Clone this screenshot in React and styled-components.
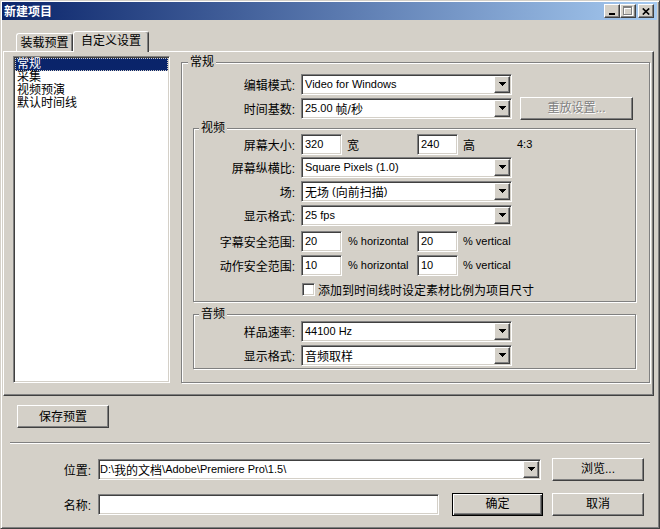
import React from "react";
import styled, { createGlobalStyle, css } from "styled-components";

const FACE = "#d4d0c8";
const SHADOW = "#808080";
const DARK = "#404040";
const HI = "#ffffff";
const SEL = "#0a246a";

const GlobalStyle = createGlobalStyle`
  *, *::before, *::after { box-sizing: border-box; }
  html, body { margin: 0; padding: 0; background: ${FACE}; }
  body {
    font-family: "Liberation Sans", "Noto Sans CJK SC", sans-serif;
    font-size: 12px;
    color: #000;
  }
`;

const sunken = css`
  background: #fff;
  border: 1px solid;
  border-color: ${SHADOW} ${HI} ${HI} ${SHADOW};
  box-shadow: inset 1px 1px 0 ${DARK}, inset -1px -1px 0 ${FACE};
`;

const raised = css`
  background: ${FACE};
  border: 1px solid;
  border-color: ${HI} ${DARK} ${DARK} ${HI};
  box-shadow: inset -1px -1px 0 ${SHADOW};
`;

const Window = styled.div`
  width: 660px;
  height: 529px;
  display: flex;
  flex-direction: column;
  background: ${FACE};
  border: 1px solid;
  border-color: ${FACE} ${DARK} ${DARK} ${FACE};
  box-shadow: inset 1px 1px 0 ${HI}, inset -1px -1px 0 ${SHADOW};
  padding: 1px 2px 2px 1px;
`;

const TitleBar = styled.div`
  height: 18px;
  flex: none;
  display: flex;
  align-items: center;
  padding: 0 3px 0 2px;
  background: linear-gradient(to right, #0a246a, #a6caf0);
`;

const TitleText = styled.div`
  flex: 1;
  color: #fff;
  font-weight: bold;
  font-size: 12px;
  line-height: 14px;
  font-family: "Noto Sans CJK SC", sans-serif;
`;

const CaptionButtons = styled.div`
  display: flex;
  align-items: center;
`;

const CaptionButton = styled.div`
  ${raised}
  width: 16px;
  height: 14px;
  margin-left: ${(p) => p.$gap || 0}px;
  display: flex;
  align-items: center;
  justify-content: center;
  svg { display: block; }
`;

const TabStrip = styled.div`
  flex: none;
  height: 20px;
  margin-top: 11px;
  padding-left: 14px;
  display: flex;
  align-items: flex-end;
`;

const Tab = styled.div`
  ${raised}
  border-bottom: none;
  box-shadow: inset -1px 0 0 ${SHADOW};
  border-radius: 3px 3px 0 0;
  width: ${(p) => p.$w}px;
  height: ${(p) => (p.$active ? 21 : 18)}px;
  margin-bottom: ${(p) => (p.$active ? -1 : 0)}px;
  display: flex;
  align-items: center;
  justify-content: center;
  line-height: 14px;
  ${(p) =>
    p.$active &&
    css`
      position: relative;
      z-index: 1;
      padding-bottom: 2px;
    `}
`;

const TabPanel = styled.div`
  ${raised}
  flex: none;
  margin-left: 1px;
  width: 651px;
  height: 345px;
  display: flex;
  gap: 11px;
  padding: 4px 3px 12px 9px;
`;

const ListBox = styled.div`
  ${sunken}
  width: 157px;
  flex: none;
  padding: 1px;
  display: flex;
  flex-direction: column;
`;

const ListItem = styled.div`
  height: 13px;
  line-height: 13px;
  padding-left: 2px;
  white-space: nowrap;
  ${(p) =>
    p.$selected &&
    css`
      background: ${SEL};
      color: #fff;
      outline: 1px dotted ${FACE};
      outline-offset: -1px;
    `}
`;

const Group = styled.div`
  position: relative;
  flex: ${(p) => (p.$grow ? 1 : "none")};
  border: 1px solid ${SHADOW};
  box-shadow: inset 1px 1px 0 ${HI}, 1px 1px 0 ${HI};
  display: flex;
  flex-direction: column;
  margin-top: ${(p) => p.$mt || 0}px;
  padding: ${(p) => p.$pad};
`;

const Caption = styled.span`
  position: absolute;
  top: -7px;
  left: ${(p) => p.$left}px;
  padding: 0 2px;
  background: ${FACE};
  line-height: 13px;
  font-size: 12px;
`;

const FormRow = styled.div`
  display: flex;
  align-items: center;
  height: ${(p) => p.$h || 24}px;
  margin-top: ${(p) => p.$mt || 0}px;
  flex: none;
`;

const FieldLabel = styled.span`
  width: ${(p) => p.$w}px;
  flex: none;
  text-align: right;
  padding-right: 6px;
  white-space: nowrap;
`;

const ComboFrame = styled.div`
  ${sunken}
  width: ${(p) => p.$w}px;
  height: 21px;
  flex: none;
  padding: 1px;
  display: flex;
  align-items: stretch;
`;

const ComboValue = styled.div`
  flex: 1;
  display: flex;
  align-items: center;
  padding-left: ${(p) => (p.$pl != null ? p.$pl : 2)}px;
  font-size: 11px;
  white-space: nowrap;
  overflow: hidden;
`;

const Cjk = styled.span`
  font-size: 12px;
`;

const DropButton = styled.div`
  ${raised}
  width: 16px;
  flex: none;
  display: flex;
  align-items: center;
  justify-content: center;
  svg { display: block; }
`;

const TextBox = styled.div`
  ${sunken}
  width: ${(p) => p.$w}px;
  height: 21px;
  flex: none;
  display: flex;
  align-items: center;
  padding: 0 3px;
  font-size: 11px;
`;

const Unit = styled.span`
  width: ${(p) => p.$w}px;
  flex: none;
  padding-left: ${(p) => p.$pl || 5}px;
  white-space: nowrap;
  font-size: ${(p) => (p.$latin ? 11 : 12)}px;
`;

const Ratio = styled.span`
  font-size: 11px;
`;

const CheckBox = styled.div`
  ${sunken}
  width: 13px;
  height: 13px;
  flex: none;
`;

const CheckLabel = styled.span`
  margin-left: 3px;
  white-space: nowrap;
`;

const PushButton = styled.div`
  ${raised}
  width: ${(p) => p.$w}px;
  height: 23px;
  flex: none;
  margin-left: ${(p) => p.$ml || 0}px;
  display: flex;
  align-items: center;
  justify-content: center;
  line-height: 14px;
  ${(p) =>
    p.$disabled &&
    css`
      color: ${SHADOW};
      text-shadow: 1px 1px 0 ${HI};
    `}
`;

const DefaultButton = styled(PushButton)`
  border: 1px solid #000;
  box-shadow: inset 1px 1px 0 ${HI}, inset -1px -1px 0 ${DARK},
    inset -2px -2px 0 ${SHADOW};
`;

const SaveRow = styled.div`
  flex: none;
  display: flex;
  margin-top: 9px;
  padding-left: 15px;
`;

const Separator = styled.div`
  flex: none;
  width: 640px;
  height: 2px;
  margin: 14px 0 0 8px;
  border-top: 1px solid ${SHADOW};
  border-bottom: 1px solid ${HI};
`;

const BottomRow = styled.div`
  flex: none;
  display: flex;
  align-items: center;
  height: 24px;
  margin-top: ${(p) => p.$mt}px;
`;

const BottomLabel = styled.span`
  width: 96px;
  flex: none;
  text-align: right;
  padding-right: 7px;
`;

function Arrow() {
  return (
    <svg width="7" height="4" viewBox="0 0 7 4" shapeRendering="crispEdges">
      <rect x="0" y="0" width="7" height="1" fill="#000" />
      <rect x="1" y="1" width="5" height="1" fill="#000" />
      <rect x="2" y="2" width="3" height="1" fill="#000" />
      <rect x="3" y="3" width="1" height="1" fill="#000" />
    </svg>
  );
}

function ComboBox({ width = 211, pl, children }) {
  return (
    <ComboFrame $w={width}>
      <ComboValue $pl={pl}>{children}</ComboValue>
      <DropButton>
        <Arrow />
      </DropButton>
    </ComboFrame>
  );
}

function MinGlyph() {
  return (
    <svg width="8" height="7" viewBox="0 0 8 7" shapeRendering="crispEdges">
      <rect x="1" y="5" width="6" height="2" fill="#000" />
    </svg>
  );
}

function MaxGlyph() {
  return (
    <svg width="10" height="10" viewBox="0 0 10 10" shapeRendering="crispEdges">
      <rect x="1.5" y="1.5" width="8" height="8" fill="none" stroke="#fff" />
      <rect x="1" y="2" width="8" height="1" fill="#fff" />
      <rect x="0.5" y="0.5" width="8" height="8" fill="none" stroke={SHADOW} />
      <rect x="0" y="1" width="9" height="1" fill={SHADOW} />
    </svg>
  );
}

function CloseGlyph() {
  return (
    <svg width="8" height="7" viewBox="0 0 8 7">
      <path d="M0.8 0.5 L7.2 6.5 M7.2 0.5 L0.8 6.5" stroke="#000" strokeWidth="1.7" />
    </svg>
  );
}

export default function App() {
  return (
    <>
      <GlobalStyle />
      <Window>
        <TitleBar>
          <TitleText>新建项目</TitleText>
          <CaptionButtons>
            <CaptionButton>
              <MinGlyph />
            </CaptionButton>
            <CaptionButton>
              <MaxGlyph />
            </CaptionButton>
            <CaptionButton $gap={2}>
              <CloseGlyph />
            </CaptionButton>
          </CaptionButtons>
        </TitleBar>

        <TabStrip>
          <Tab $w={57}>装载预置</Tab>
          <Tab $w={76} $active>
            自定义设置
          </Tab>
        </TabStrip>

        <TabPanel>
          <ListBox>
            <ListItem $selected>常规</ListItem>
            <ListItem>采集</ListItem>
            <ListItem>视频预演</ListItem>
            <ListItem>默认时间线</ListItem>
          </ListBox>

          <Group $grow $mt={6} $pad="9px 13px 0 11px">
            <Caption $left={6}>常规</Caption>
            <FormRow>
              <FieldLabel $w={108}>编辑模式:</FieldLabel>
              <ComboBox>Video for Windows</ComboBox>
            </FormRow>
            <FormRow>
              <FieldLabel $w={108}>时间基数:</FieldLabel>
              <ComboBox>
                25.00&nbsp;<Cjk>帧/秒</Cjk>
              </ComboBox>
              <PushButton $w={113} $ml={8} $disabled>
                重放设置...
              </PushButton>
            </FormRow>

            <Group $mt={8} $pad="4px 0 0 0">
              <Caption $left={5}>视频</Caption>
              <FormRow $h={22}>
                <FieldLabel $w={107}>屏幕大小:</FieldLabel>
                <TextBox $w={41}>320</TextBox>
                <Unit $w={75}>宽</Unit>
                <TextBox $w={41}>240</TextBox>
                <Unit $w={59}>高</Unit>
                <Ratio>4:3</Ratio>
              </FormRow>
              <FormRow>
                <FieldLabel $w={107}>屏幕纵横比:</FieldLabel>
                <ComboBox>Square Pixels (1.0)</ComboBox>
              </FormRow>
              <FormRow>
                <FieldLabel $w={107}>场:</FieldLabel>
                <ComboBox>
                  <Cjk>无场</Cjk>&nbsp;(<Cjk>向前扫描</Cjk>)
                </ComboBox>
              </FormRow>
              <FormRow>
                <FieldLabel $w={107}>显示格式:</FieldLabel>
                <ComboBox>25 fps</ComboBox>
              </FormRow>
              <FormRow $mt={2}>
                <FieldLabel $w={107}>字幕安全范围:</FieldLabel>
                <TextBox $w={41}>20</TextBox>
                <Unit $w={75} $pl={6} $latin>
                  % horizontal
                </Unit>
                <TextBox $w={41}>20</TextBox>
                <Unit $w={80} $latin>
                  % vertical
                </Unit>
              </FormRow>
              <FormRow>
                <FieldLabel $w={107}>动作安全范围:</FieldLabel>
                <TextBox $w={41}>10</TextBox>
                <Unit $w={75} $pl={6} $latin>
                  % horizontal
                </Unit>
                <TextBox $w={41}>10</TextBox>
                <Unit $w={80} $latin>
                  % vertical
                </Unit>
              </FormRow>
              <FormRow>
                <FieldLabel $w={108} />
                <CheckBox />
                <CheckLabel>添加到时间线时设定素材比例为项目尺寸</CheckLabel>
              </FormRow>
            </Group>

            <Group $mt={12} $pad="4px 0 1px 0">
              <Caption $left={5}>音频</Caption>
              <FormRow>
                <FieldLabel $w={107}>样品速率:</FieldLabel>
                <ComboBox>44100 Hz</ComboBox>
              </FormRow>
              <FormRow>
                <FieldLabel $w={107}>显示格式:</FieldLabel>
                <ComboBox>
                  <Cjk>音频取样</Cjk>
                </ComboBox>
              </FormRow>
            </Group>
          </Group>
        </TabPanel>

        <SaveRow>
          <PushButton $w={92}>保存预置</PushButton>
        </SaveRow>

        <Separator />

        <BottomRow $mt={13}>
          <BottomLabel>位置:</BottomLabel>
          <ComboBox width={443} pl={0}>
            D:\<Cjk>我的文档</Cjk>\Adobe\Premiere Pro\1.5\
          </ComboBox>
          <PushButton $w={92} $ml={11}>
            浏览...
          </PushButton>
        </BottomRow>

        <BottomRow $mt={11}>
          <BottomLabel>名称:</BottomLabel>
          <TextBox $w={341} />
          <DefaultButton $w={91} $ml={13}>
            确定
          </DefaultButton>
          <PushButton $w={92} $ml={9}>
            取消
          </PushButton>
        </BottomRow>
      </Window>
    </>
  );
}
